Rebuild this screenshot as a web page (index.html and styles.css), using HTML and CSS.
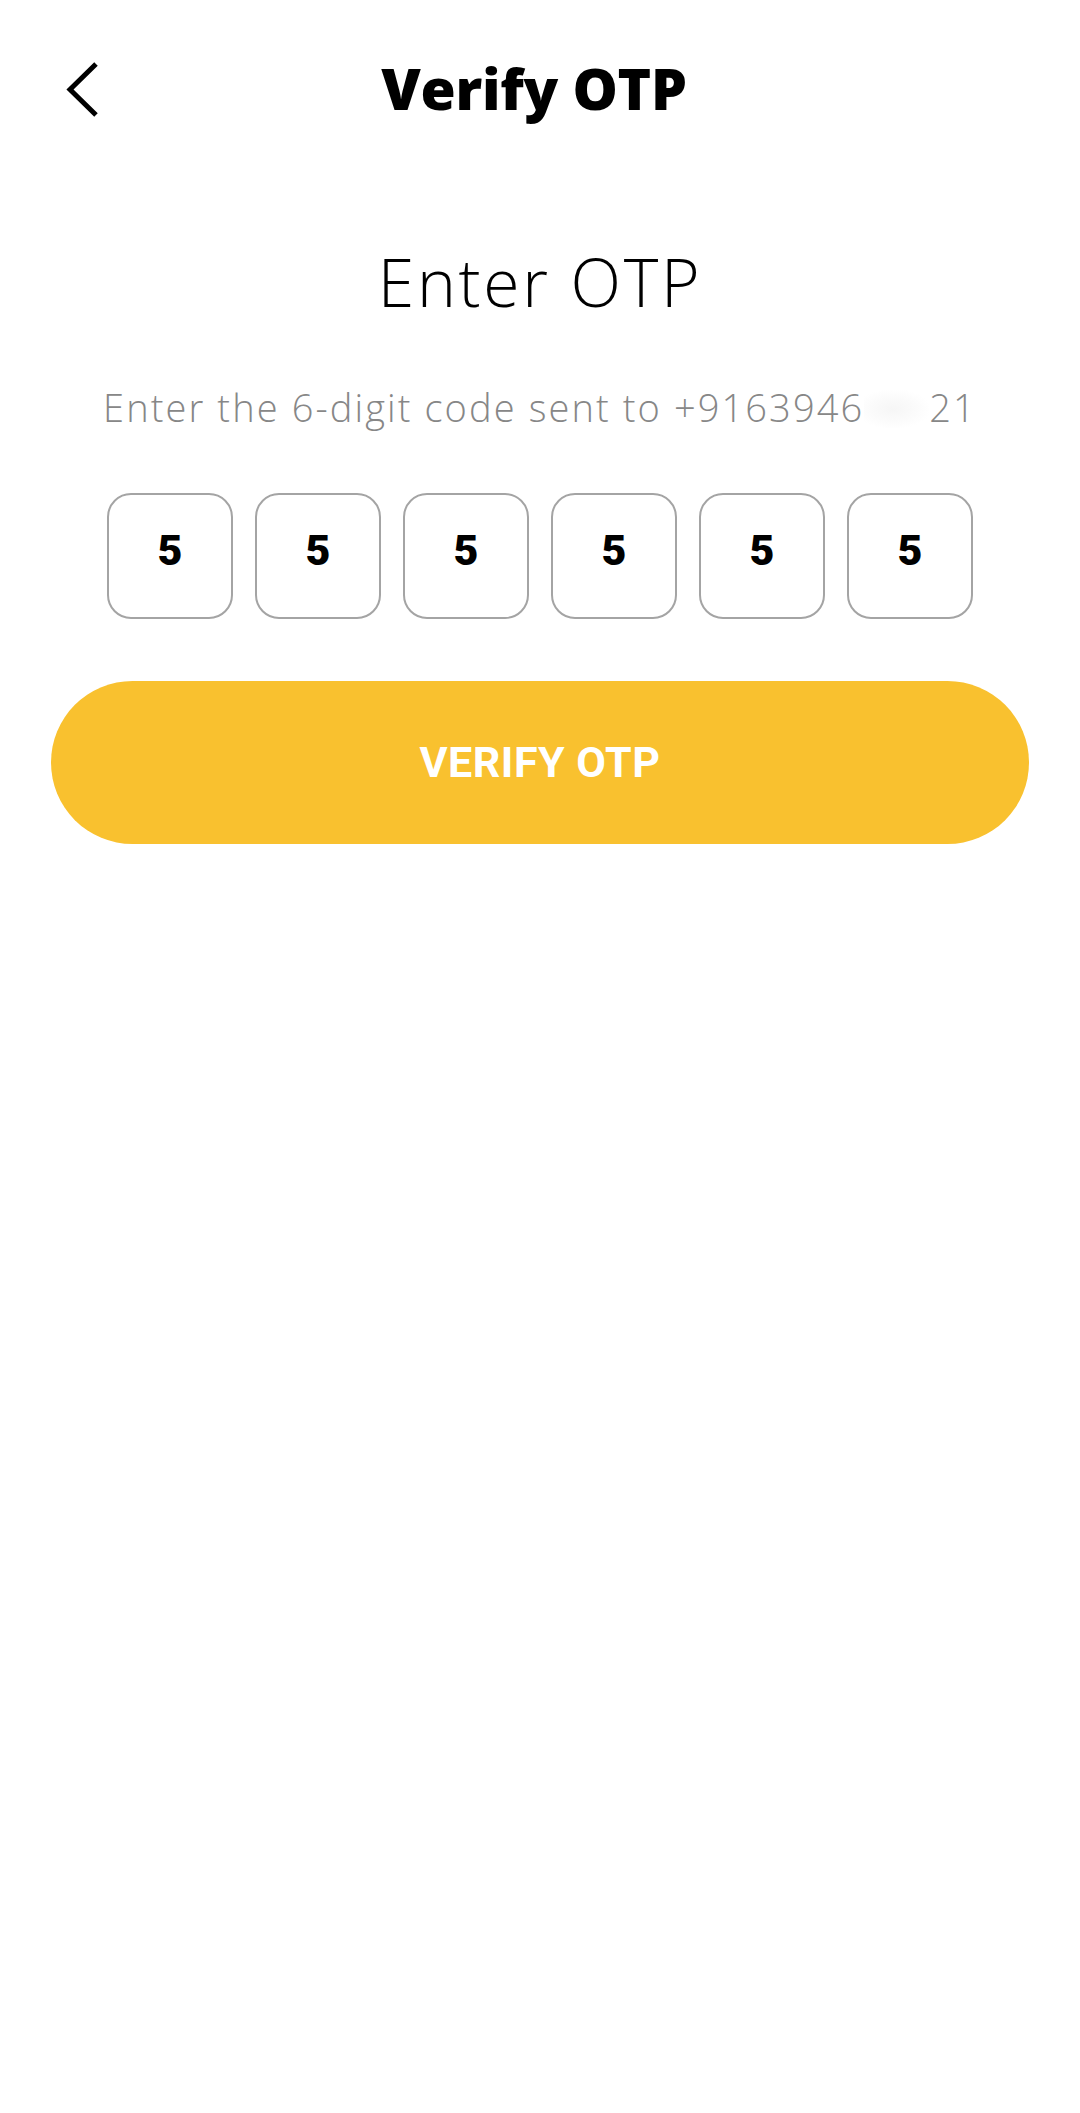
FILE: index.html
```html
<!DOCTYPE html>
<html lang="en">
<head>
<meta charset="utf-8">
<title>Verify OTP</title>
<link rel="stylesheet" href="styles.css">
</head>
<body>
<div class="screen">
  <header class="topbar">
    <div class="topbar-left">
      <button class="back" aria-label="Back">
        <svg width="36" height="60" viewBox="0 0 36 60" aria-hidden="true">
          <path d="M32 6 L6 31.5 L32 57" fill="none" stroke="#000" stroke-width="5" stroke-linejoin="miter"/>
        </svg>
      </button>
    </div>
    <h1 class="topbar-title">Verify OTP</h1>
    <div class="topbar-right"></div>
  </header>

  <main class="content">
    <h2 class="heading">Enter OTP</h2>
    <p class="subtitle">Enter the 6-digit code sent to +9163946<span class="masked"></span>21</p>

    <div class="otp-row">
      <div class="otp-box">5</div>
      <div class="otp-box">5</div>
      <div class="otp-box">5</div>
      <div class="otp-box">5</div>
      <div class="otp-box">5</div>
      <div class="otp-box">5</div>
    </div>

    <button class="verify-btn">VERIFY OTP</button>
  </main>
</div>
</body>
</html>
```

FILE: styles.css
```css
* {
  box-sizing: border-box;
}

html, body {
  margin: 0;
  padding: 0;
  background: #ffffff;
}

body {
  font-family: "Open Sans", "Noto Sans", sans-serif;
  color: #000;
}

.screen {
  width: 1080px;
  min-height: 2113px;
  background: #ffffff;
}

.topbar {
  height: 176px;
  display: grid;
  grid-template-columns: 1fr auto 1fr;
  align-items: center;
}

.topbar-left {
  padding-left: 64px;
  display: flex;
  align-items: center;
}

.back {
  background: none;
  border: none;
  padding: 0;
  margin: 0;
  display: flex;
  width: 36px;
  height: 60px;
  cursor: pointer;
}

.topbar-title {
  margin: 0;
  padding-right: 12px;
  font-family: "Open Sans", sans-serif;
  font-weight: 800;
  font-size: 57px;
  line-height: 59px;
  letter-spacing: -0.3px;
  color: #000;
}

.content {
  display: flex;
  flex-direction: column;
  align-items: center;
  padding-top: 72px;
}

.heading {
  margin: 0;
  font-family: "Open Sans", sans-serif;
  font-weight: 300;
  font-size: 66px;
  line-height: 66px;
  letter-spacing: 2.7px;
  color: #000;
}

.subtitle {
  margin: 74px 0 0;
  font-family: "Open Sans", sans-serif;
  font-weight: 300;
  font-size: 38px;
  line-height: 38px;
  letter-spacing: 2.1px;
  color: #878787;
  white-space: nowrap;
}

.masked {
  display: inline-block;
  width: 3ch;
  height: 1em;
  vertical-align: -0.15em;
  background: radial-gradient(ellipse at 45% 50%, #f6f6f6 0%, #fbfbfb 45%, #ffffff 75%);
}

.otp-row {
  display: flex;
  gap: 22px;
  margin-top: 65px;
}

.otp-box {
  width: 126px;
  height: 126px;
  border: 2px solid #a4a4a4;
  border-radius: 24px;
  display: flex;
  align-items: center;
  justify-content: center;
  padding-bottom: 11px;
  font-family: "Roboto", "Liberation Sans", sans-serif;
  font-weight: 900;
  font-size: 43px;
  color: #000;
}

.verify-btn {
  margin-top: 62px;
  width: 978px;
  height: 163px;
  border: none;
  border-radius: 82px;
  background: #f9c12f;
  color: #ffffff;
  font-family: "Roboto", "Liberation Sans", sans-serif;
  font-weight: 700;
  font-size: 43px;
  letter-spacing: 0.5px;
  cursor: pointer;
}
```
